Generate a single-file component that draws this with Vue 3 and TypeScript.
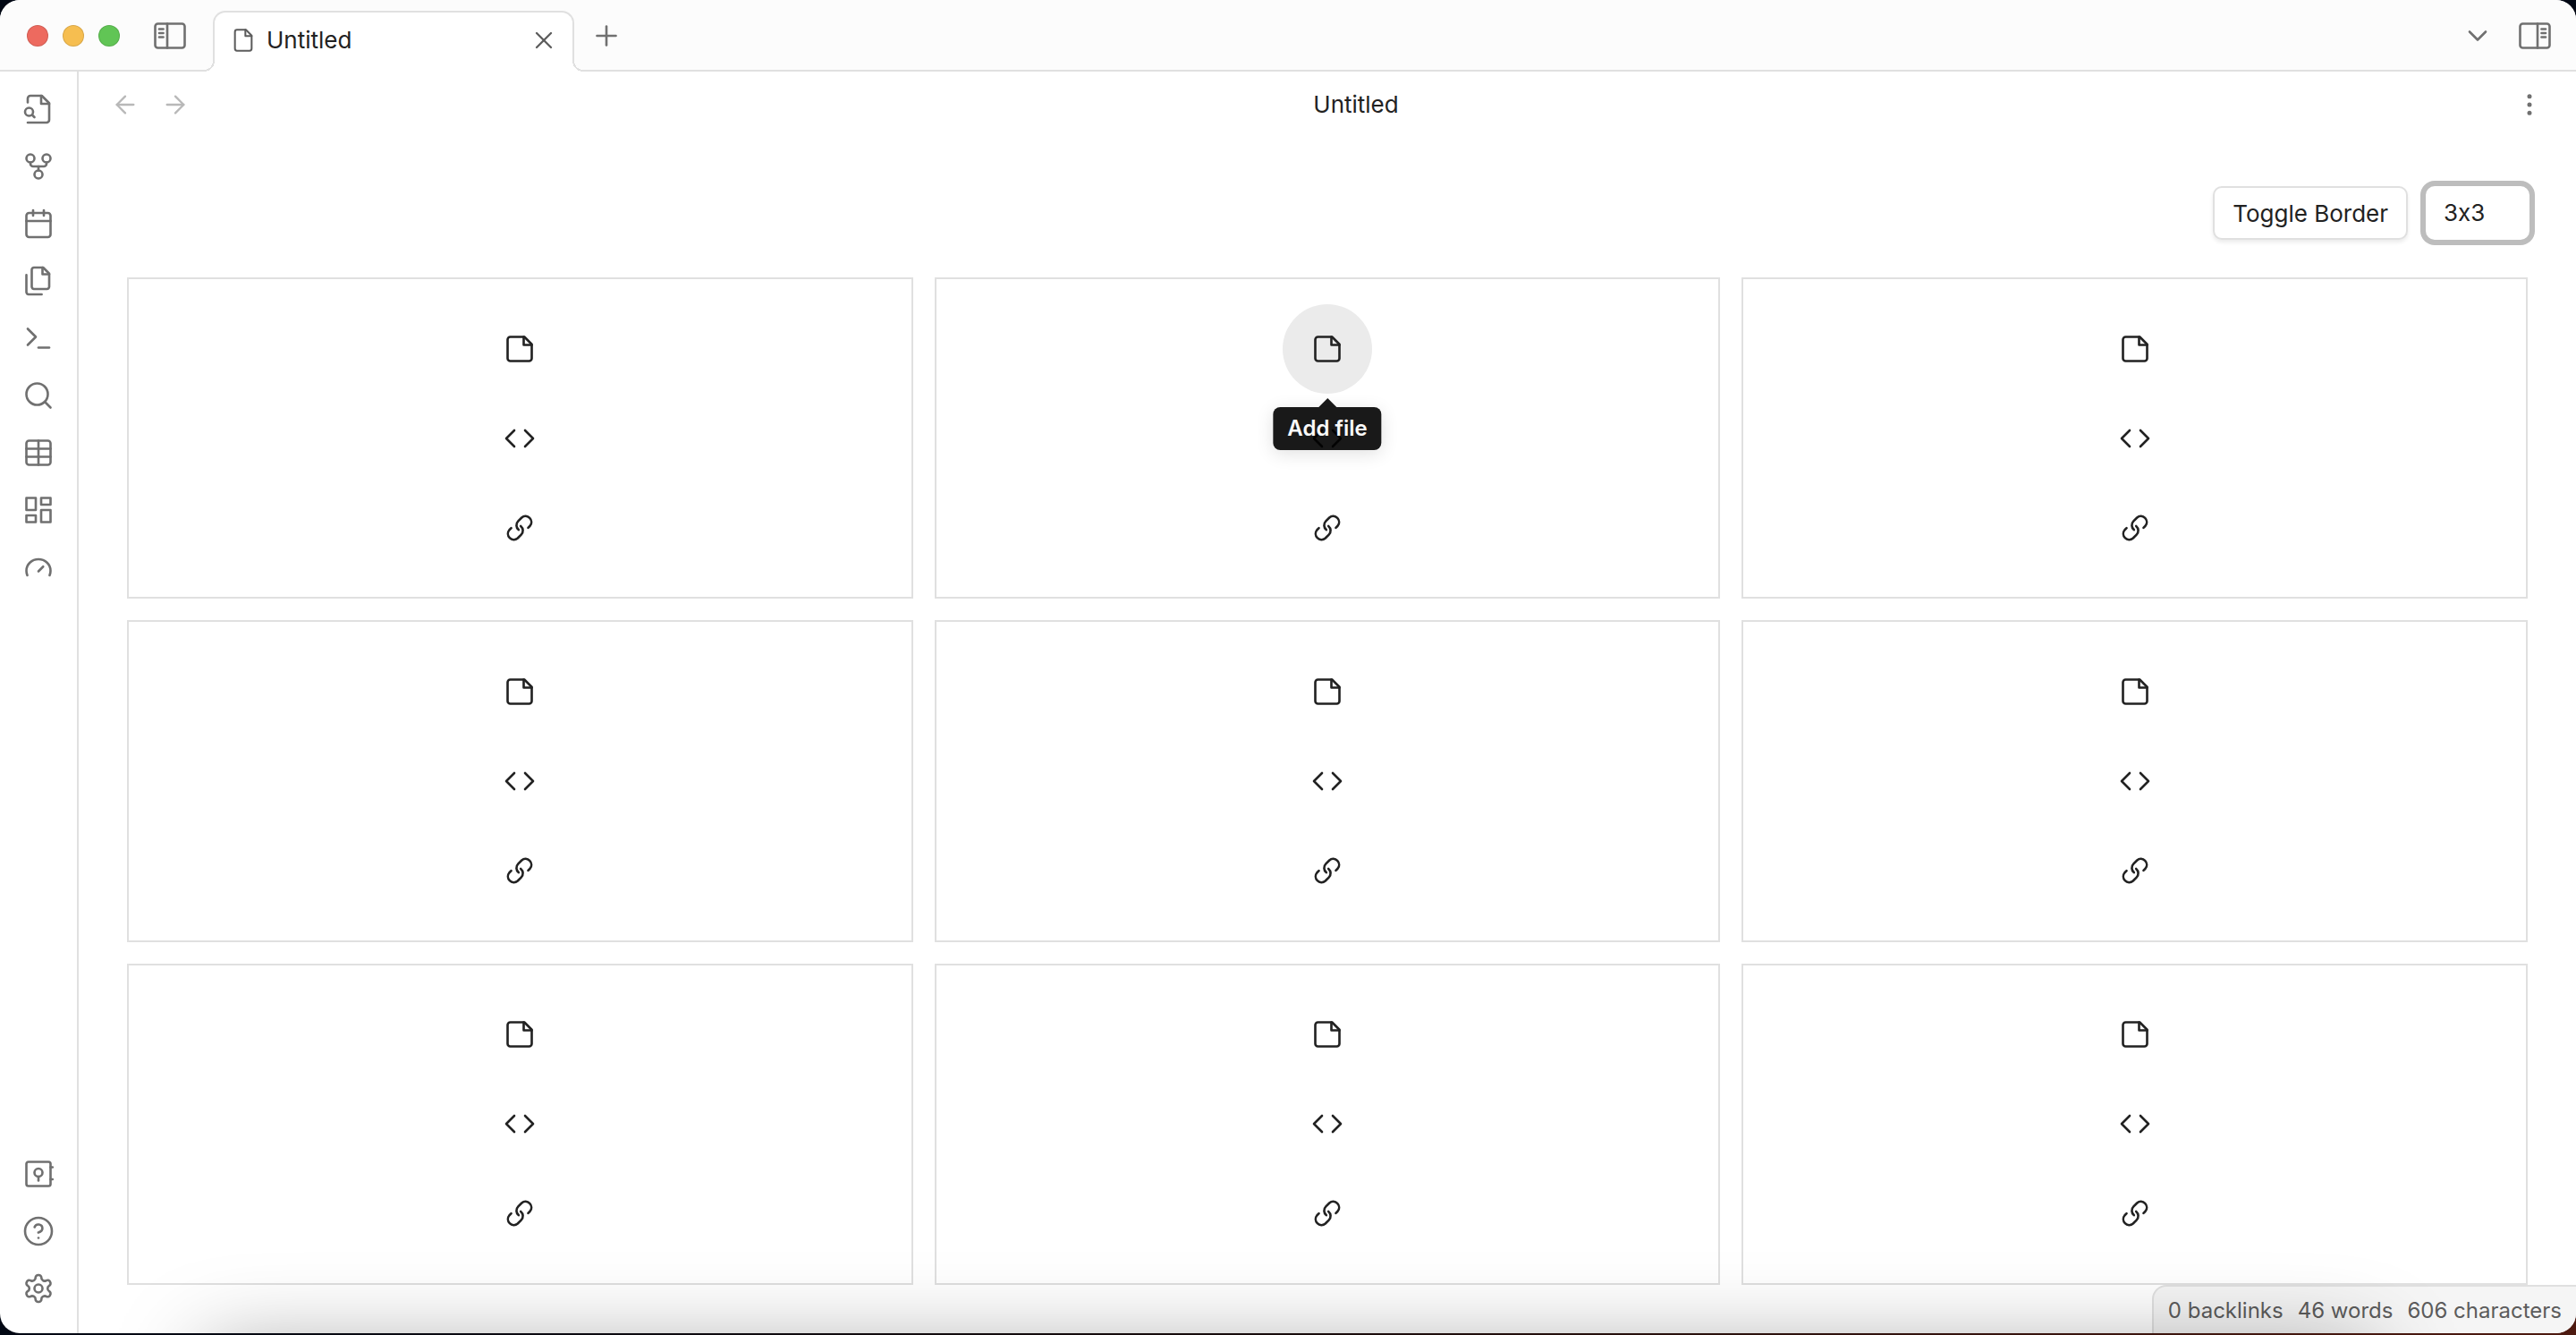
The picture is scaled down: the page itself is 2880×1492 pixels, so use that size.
<script setup lang="ts">
import { ref } from 'vue'

type IconName = keyof typeof icons

const ring = (cx: number, cy: number, r: number): string =>
  `M${cx - r} ${cy}a${r} ${r} 0 1 0 ${2 * r} 0a${r} ${r} 0 1 0 ${-2 * r} 0`

const icons = {
  panelLeft: ['M3 3h18a2 2 0 0 1 2 2v14a2 2 0 0 1-2 2H3a2 2 0 0 1-2-2V5a2 2 0 0 1 2-2z', 'M10 3v18', 'M4 7h3', 'M4 10h3', 'M4 13h3'],
  panelRight: ['M3 3h18a2 2 0 0 1 2 2v14a2 2 0 0 1-2 2H3a2 2 0 0 1-2-2V5a2 2 0 0 1 2-2z', 'M14 3v18', 'M17 7h3', 'M17 10h3', 'M17 13h3'],
  file: ['M14.5 2H6a2 2 0 0 0-2 2v16a2 2 0 0 0 2 2h12a2 2 0 0 0 2-2V7.5L14.5 2z', 'M14 2v6h6'],
  close: ['M18 6L6 18', 'M6 6l12 12'],
  plus: ['M5 12h14', 'M12 5v14'],
  chevron: ['M6 9l6 6 6-6'],
  back: ['M12 19l-7-7 7-7', 'M19 12H5'],
  forward: ['M5 12h14', 'M12 5l7 7-7 7'],
  more: [ring(12, 12, 1), ring(12, 5, 1), ring(12, 19, 1)],
  fileSearch: ['M4 22h14a2 2 0 0 0 2-2V7.5L14.5 2H6a2 2 0 0 0-2 2v3', 'M14 2v6h6', ring(5, 14, 3), 'M9 18l-1.5-1.5'],
  graph: [ring(12, 18, 3), ring(6, 6, 3), ring(18, 6, 3), 'M18 9v1a2 2 0 0 1-2 2H8a2 2 0 0 1-2-2V9', 'M12 12v3'],
  calendar: ['M5 4h14a2 2 0 0 1 2 2v14a2 2 0 0 1-2 2H5a2 2 0 0 1-2-2V6a2 2 0 0 1 2-2z', 'M16 2v4', 'M8 2v4', 'M3 10h18'],
  files: [
    'M15.5 2H8.6c-.4 0-.8.2-1.1.5-.3.3-.5.7-.5 1.1v12.8c0 .4.2.8.5 1.1.3.3.7.5 1.1.5h9.8c.4 0 .8-.2 1.1-.5.3-.3.5-.7.5-1.1V6.5L15.5 2z',
    'M3 7.6v12.8c0 .4.2.8.5 1.1.3.3.7.5 1.1.5h9.8',
    'M15 2v5h5',
  ],
  terminal: ['M4 17l6-6-6-6', 'M12 19h8'],
  search: [ring(11, 11, 8), 'M21 21l-4.3-4.3'],
  table: ['M5 3h14a2 2 0 0 1 2 2v14a2 2 0 0 1-2 2H5a2 2 0 0 1-2-2V5a2 2 0 0 1 2-2z', 'M12 3v18', 'M3 9h18', 'M3 15h18'],
  dashboard: ['M3 3h7v9H3z', 'M14 3h7v5h-7z', 'M14 12h7v9h-7z', 'M3 16h7v5H3z'],
  gauge: ['M12 15l3.5-3.5', 'M20.3 18c.4-1 .7-2.2.7-3.4C21 9.8 17 6 12 6s-9 3.8-9 8.6c0 1.2.3 2.4.7 3.4'],
  vault: ['M4.5 3h15a1.5 1.5 0 0 1 1.5 1.5v15a1.5 1.5 0 0 1-1.5 1.5h-15A1.5 1.5 0 0 1 3 19.5v-15A1.5 1.5 0 0 1 4.5 3z', ring(12, 11, 3), 'M12 14v3', 'M21 7h1.5', 'M21 16h1.5'],
  help: [ring(12, 12, 10), 'M9.09 9a3 3 0 0 1 5.83 1c0 2-3 3-3 3', 'M12 17h.01'],
  settings: [
    'M12.22 2h-.44a2 2 0 0 0-2 2v.18a2 2 0 0 1-1 1.73l-.43.25a2 2 0 0 1-2 0l-.15-.08a2 2 0 0 0-2.73.73l-.22.38a2 2 0 0 0 .73 2.73l.15.1a2 2 0 0 1 1 1.72v.51a2 2 0 0 1-1 1.74l-.15.09a2 2 0 0 0-.73 2.73l.22.38a2 2 0 0 0 2.73.73l.15-.08a2 2 0 0 1 2 0l.43.25a2 2 0 0 1 1 1.73V20a2 2 0 0 0 2 2h.44a2 2 0 0 0 2-2v-.18a2 2 0 0 1 1-1.73l.43-.25a2 2 0 0 1 2 0l.15.08a2 2 0 0 0 2.73-.73l.22-.39a2 2 0 0 0-.73-2.73l-.15-.08a2 2 0 0 1-1-1.74v-.5a2 2 0 0 1 1-1.74l.15-.09a2 2 0 0 0 .73-2.73l-.22-.38a2 2 0 0 0-2.73-.73l-.15.08a2 2 0 0 1-2 0l-.43-.25a2 2 0 0 1-1-1.73V4a2 2 0 0 0-2-2z',
    ring(12, 12, 3),
  ],
  note: ['M15.5 3H5a2 2 0 0 0-2 2v14a2 2 0 0 0 2 2h14a2 2 0 0 0 2-2V8.5L15.5 3z', 'M15 3v6h6'],
  code: ['M16 18l6-6-6-6', 'M8 6l-6 6 6 6'],
  link: [
    'M11.2 13.4A4.4 4.4 0 0 1 10.9 6.9L13.5 4.3A4.4 4.4 0 0 1 19.7 10.5L18.3 11.9',
    'M12.8 10.6A4.4 4.4 0 0 1 13.1 17.1L10.5 19.7A4.4 4.4 0 0 1 4.3 13.5L5.7 12.1',
  ],
}

interface Action {
  icon: IconName
  label: string
}

const ribbonTop: Action[] = [
  { icon: 'fileSearch', label: 'Open quick switcher' },
  { icon: 'graph', label: 'Open graph view' },
  { icon: 'calendar', label: 'Open daily note' },
  { icon: 'files', label: 'Insert template' },
  { icon: 'terminal', label: 'Open command palette' },
  { icon: 'search', label: 'Search' },
  { icon: 'table', label: 'Table' },
  { icon: 'dashboard', label: 'Dashboard' },
  { icon: 'gauge', label: 'Gauge' },
]

const ribbonBottom: Action[] = [
  { icon: 'vault', label: 'Open another vault' },
  { icon: 'help', label: 'Help' },
  { icon: 'settings', label: 'Settings' },
]

const cellActions: Action[] = [
  { icon: 'note', label: 'Add file' },
  { icon: 'code', label: 'Add code' },
  { icon: 'link', label: 'Add link' },
]

const size = ref('3x3')
const sizes = ['1x1', '2x2', '3x3']
const bordered = ref(true)
const hovered = ref({ cell: 2, action: 0 })
const stats = ['0 backlinks', '46 words', '606 characters']

const isHovered = (cell: number, action: number): boolean =>
  hovered.value.cell === cell && hovered.value.action === action
</script>

<template>
  <div class="desktop">
    <div class="window">
      <header class="titlebar">
        <div class="lights">
          <span class="light red"></span>
          <span class="light yellow"></span>
          <span class="light green"></span>
        </div>
        <button class="icon-btn panel-left" aria-label="Toggle left sidebar">
          <svg class="icon" viewBox="0 0 24 24"><path v-for="d in icons.panelLeft" :key="d" :d="d" /></svg>
        </button>
        <div class="tab">
          <svg class="icon tab-icon" viewBox="0 0 24 24"><path v-for="d in icons.file" :key="d" :d="d" /></svg>
          <span class="tab-title">Untitled</span>
          <button class="icon-btn" aria-label="Close tab">
            <svg class="icon medium" viewBox="0 0 24 24"><path v-for="d in icons.close" :key="d" :d="d" /></svg>
          </button>
        </div>
        <button class="icon-btn new-tab" aria-label="New tab">
          <svg class="icon" viewBox="0 0 24 24"><path v-for="d in icons.plus" :key="d" :d="d" /></svg>
        </button>
        <div class="titlebar-end">
          <button class="icon-btn" aria-label="Tab list">
            <svg class="icon" viewBox="0 0 24 24"><path v-for="d in icons.chevron" :key="d" :d="d" /></svg>
          </button>
          <button class="icon-btn" aria-label="Toggle right sidebar">
            <svg class="icon" viewBox="0 0 24 24"><path v-for="d in icons.panelRight" :key="d" :d="d" /></svg>
          </button>
        </div>
      </header>

      <div class="workspace">
        <nav class="ribbon" aria-label="Ribbon">
          <div class="ribbon-group">
            <button v-for="item in ribbonTop" :key="item.icon" class="ribbon-btn" :aria-label="item.label">
              <svg class="icon" viewBox="0 0 24 24"><path v-for="d in icons[item.icon]" :key="d" :d="d" /></svg>
            </button>
          </div>
          <div class="ribbon-group">
            <button v-for="item in ribbonBottom" :key="item.icon" class="ribbon-btn" :aria-label="item.label">
              <svg class="icon" viewBox="0 0 24 24"><path v-for="d in icons[item.icon]" :key="d" :d="d" /></svg>
            </button>
          </div>
        </nav>

        <main class="view">
          <div class="view-header">
            <div class="history">
              <button class="icon-btn faint" aria-label="Navigate back">
                <svg class="icon medium" viewBox="0 0 24 24"><path v-for="d in icons.back" :key="d" :d="d" /></svg>
              </button>
              <button class="icon-btn faint" aria-label="Navigate forward">
                <svg class="icon medium" viewBox="0 0 24 24"><path v-for="d in icons.forward" :key="d" :d="d" /></svg>
              </button>
            </div>
            <div class="view-title">Untitled</div>
            <button class="icon-btn" aria-label="More options">
              <svg class="icon medium solid" viewBox="0 0 24 24"><path v-for="d in icons.more" :key="d" :d="d" /></svg>
            </button>
          </div>

          <div class="toolbar">
            <button class="toggle" @click="bordered = !bordered">Toggle Border</button>
            <select v-model="size" class="size" aria-label="Grid size">
              <option v-for="s in sizes" :key="s" :value="s">{{ s }}</option>
            </select>
          </div>

          <div class="grid">
            <section v-for="cell in 9" :key="cell" class="cell" :class="{ bare: !bordered }">
              <button
                v-for="(action, i) in cellActions"
                :key="action.icon"
                class="add"
                :class="{ hovered: isHovered(cell, i) }"
                :aria-label="action.label"
                @mouseenter="hovered = { cell, action: i }"
              >
                <svg class="icon" viewBox="0 0 24 24"><path v-for="d in icons[action.icon]" :key="d" :d="d" /></svg>
                <span v-if="isHovered(cell, i)" class="tooltip" role="tooltip">{{ action.label }}</span>
              </button>
            </section>
          </div>
        </main>
      </div>

      <footer class="status">
        <span v-for="stat in stats" :key="stat">{{ stat }}</span>
      </footer>
    </div>
  </div>
</template>

<style>
body {
  margin: 0;
}
</style>

<style scoped>
.desktop {
  box-sizing: border-box;
  min-height: 100vh;
  padding-bottom: 2px;
  display: flex;
  background: linear-gradient(#020814, transparent), linear-gradient(90deg, #020814, #180c0c 50%, #4e1a10);
  font-family: Inter, "Liberation Sans", sans-serif;
  font-feature-settings: "calt" 0;
  font-size: 26px;
  line-height: 32px;
  color: #222;
}

.desktop *,
.desktop *::before,
.desktop *::after {
  box-sizing: border-box;
}

.window {
  position: relative;
  flex: 1;
  display: flex;
  flex-direction: column;
  background: #fff;
  border-radius: 22px;
  overflow: hidden;
}

/* soft shade rising from the bottom edge */
.window::after {
  content: "";
  position: absolute;
  top: calc(100% + 20px);
  left: 230px;
  right: 230px;
  height: 300px;
  box-shadow: 0 0 100px rgba(0, 0, 0, 0.38);
  pointer-events: none;
}

button,
select {
  margin: 0;
  font: inherit;
  font-feature-settings: inherit;
  color: inherit;
}

.icon {
  display: block;
  flex: none;
  width: 36px;
  height: 36px;
  fill: none;
  stroke: currentColor;
  stroke-width: 1.75;
  stroke-linecap: round;
  stroke-linejoin: round;
}

.icon.medium {
  width: 32px;
  height: 32px;
}

.icon.solid {
  fill: currentColor;
}

.icon-btn {
  flex: none;
  padding: 0;
  border: 0;
  background: none;
  color: #707070;
}

.icon-btn.faint {
  color: #b8b8b8;
}

.titlebar {
  display: flex;
  align-items: center;
  height: 80px;
  padding: 0 28px 0 30px;
  background: #fcfcfc;
  box-shadow: inset 0 -2px #e0e0e0;
}

.lights {
  display: flex;
  gap: 16px;
}

.light {
  width: 24px;
  height: 24px;
  border-radius: 50%;
  border: 1px solid rgba(0, 0, 0, 0.12);
}

.red {
  background: #ed6a5f;
}

.yellow {
  background: #f6be50;
}

.green {
  background: #61c555;
}

.panel-left {
  margin: 0 30px 0 38px;
}

.tab {
  position: relative;
  align-self: flex-end;
  display: flex;
  align-items: center;
  gap: 12px;
  width: 404px;
  height: 68px;
  padding: 0 16px 4px 18px;
  border: 2px solid #e0e0e0;
  border-bottom: 0;
  border-radius: 14px 14px 0 0;
  background: #fff;
}

.tab::before,
.tab::after {
  content: "";
  position: absolute;
  bottom: 0;
  width: 12px;
  height: 12px;
}

.tab::before {
  left: -12px;
  background: radial-gradient(circle at 0 0, #fcfcfc 10px, #e0e0e0 10px 12px, #fff 12px);
}

.tab::after {
  right: -12px;
  background: radial-gradient(circle at 100% 0, #fcfcfc 10px, #e0e0e0 10px 12px, #fff 12px);
}

.tab .icon-btn,
.tab-icon {
  color: #5c5c5c;
}

.tab .tab-icon {
  width: 28px;
  height: 28px;
}

.tab-title {
  flex: 1;
}

.new-tab {
  margin-left: 18px;
}

.titlebar-end {
  display: flex;
  gap: 28px;
  margin-left: auto;
}

.workspace {
  flex: 1;
  display: flex;
}

.ribbon {
  flex: none;
  display: flex;
  flex-direction: column;
  justify-content: space-between;
  width: 88px;
  padding: 18px 0 26px;
  border-right: 2px solid #e0e0e0;
}

.ribbon-group {
  display: flex;
  flex-direction: column;
  align-items: center;
  gap: 16px;
}

.ribbon-btn {
  padding: 6px;
  border: 0;
  background: none;
  color: #707070;
}

.view {
  flex: 1;
  display: flex;
  flex-direction: column;
  min-width: 0;
}

.view-header {
  display: flex;
  align-items: center;
  height: 74px;
  padding: 0 36px;
}

.history {
  display: flex;
  gap: 24px;
  margin-right: 8px;
}

.view-title {
  flex: 1;
  text-align: center;
}

.toolbar {
  display: flex;
  align-items: center;
  justify-content: flex-end;
  gap: 18px;
  padding: 52px 50px 40px;
}

.toggle {
  height: 60px;
  padding: 2px 20px 0;
  border: 2px solid #e0e0e0;
  border-radius: 10px;
  background: #fff;
  box-shadow: 0 3px 4px rgba(0, 0, 0, 0.08);
}

.size {
  appearance: none;
  width: 120px;
  height: 64px;
  padding: 0 20px;
  border: 2px solid #bdbdbd;
  border-radius: 12px;
  outline: 0;
  background: #fff;
  box-shadow: 0 0 0 4px #bdbdbd;
}

.grid {
  flex: 1;
  display: grid;
  grid-template-columns: repeat(3, 1fr);
  grid-auto-rows: 1fr;
  gap: 24px;
  padding: 0 54px 54px;
}

.cell {
  display: flex;
  flex-direction: column;
  align-items: center;
  justify-content: center;
  border: 2px solid #e0e0e0;
}

.cell.bare {
  border-color: transparent;
}

.add {
  position: relative;
  display: flex;
  align-items: center;
  justify-content: center;
  width: 100px;
  height: 100px;
  padding: 0;
  border: 0;
  border-radius: 50%;
  background: none;
}

.add.hovered {
  z-index: 1;
  background: #ebebeb;
}

.tooltip {
  position: absolute;
  top: calc(100% + 15px);
  left: 50%;
  transform: translateX(-50%);
  padding: 8px 16px;
  border-radius: 8px;
  background: rgba(0, 0, 0, 0.9);
  box-shadow: 0 4px 20px rgba(0, 0, 0, 0.12);
  color: #fafafa;
  font-size: 24px;
  font-weight: 600;
  white-space: nowrap;
}

.tooltip::before {
  content: "";
  position: absolute;
  bottom: 100%;
  left: 50%;
  margin-left: -10px;
  border: 10px solid transparent;
  border-top: 0;
  border-bottom-color: rgba(0, 0, 0, 0.9);
}

.status {
  position: absolute;
  right: 0;
  bottom: 0;
  display: flex;
  align-items: center;
  gap: 16px;
  height: 54px;
  padding: 2px 16px 0;
  border: 2px solid #e0e0e0;
  border-width: 2px 0 0 2px;
  border-radius: 16px 0 0 0;
  background: #f5f5f5;
  color: #5c5c5c;
  font-size: 24px;
}
</style>
